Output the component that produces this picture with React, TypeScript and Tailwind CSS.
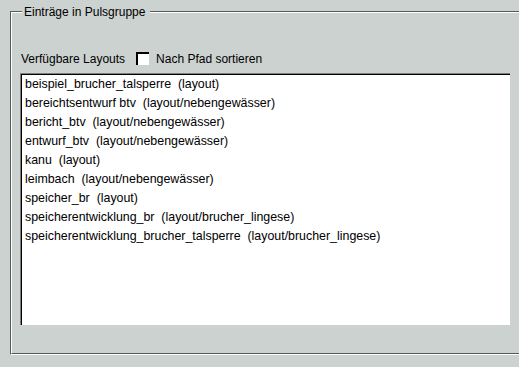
import React from "react";

const items = [
  "beispiel_brucher_talsperre\u00a0\u00a0(layout)",
  "bereichtsentwurf btv\u00a0\u00a0(layout/nebengewässer)",
  "bericht_btv\u00a0\u00a0(layout/nebengewässer)",
  "entwurf_btv\u00a0\u00a0(layout/nebengewässer)",
  "kanu\u00a0\u00a0(layout)",
  "leimbach\u00a0\u00a0(layout/nebengewässer)",
  "speicher_br\u00a0\u00a0(layout)",
  "speicherentwicklung_br\u00a0\u00a0(layout/brucher_lingese)",
  "speicherentwicklung_brucher_talsperre\u00a0\u00a0(layout/brucher_lingese)",
];

export default function App() {
  return (
    <div className="w-[519px] h-[367px] bg-[#ccd2d0] overflow-hidden font-['Liberation_Sans',Arial,sans-serif] text-[12px] text-black">
      <div className="pt-[11px] pl-[10px]">
        <div className="relative w-[520px] h-[344px] border-t border-l border-b border-t-[#555a5a] border-l-[#555a5a] border-b-white">
          <div className="h-full border-t border-l border-b border-t-white border-l-white border-b-[#555a5a] pl-[8px] pt-[37px]">
            <div className="flex items-center h-[17px]">
              <span className="ml-[1px] leading-[14px]">Verfügbare Layouts</span>
              <span className="ml-[11px] w-[13px] h-[13px] bg-white border-t-2 border-l-2 border-black" />
              <span className="ml-[7px] leading-[14px]">Nach Pfad sortieren</span>
            </div>
            <div className="mt-[6px] w-[490px] h-[252px] border-t border-l border-[#7a7f7e]">
              <div className="h-full border-t border-l border-black bg-white pl-[3px] text-[12.4px]">
                {items.map((t) => (
                  <div key={t} className="leading-[19px] whitespace-nowrap">
                    {t}
                  </div>
                ))}
              </div>
            </div>
          </div>
          <span className="absolute left-[11px] top-[-7px] pl-[2px] pr-[5px] leading-[14px] bg-[#ccd2d0]">
            Einträge in Pulsgruppe
          </span>
        </div>
      </div>
    </div>
  );
}
